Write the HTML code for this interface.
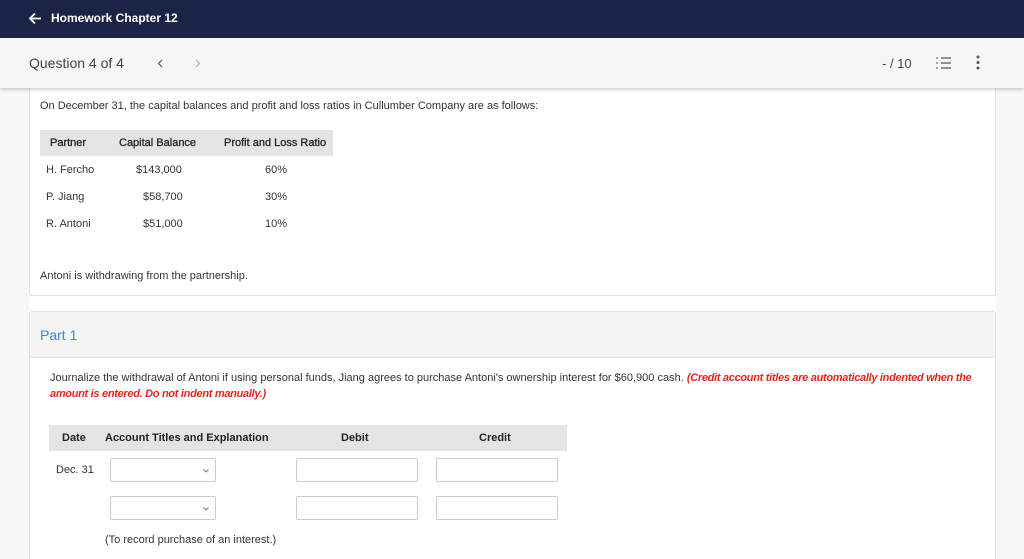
<!DOCTYPE html>
<html><head><style>
*{box-sizing:border-box;margin:0;padding:0}
html,body{width:1024px;height:559px;overflow:hidden}
body{background:#f7f7f7;font-family:"Liberation Sans",sans-serif;color:#333;position:relative}
.abs{position:absolute}
.nav{left:0;top:0;width:1024px;height:38px;background:#1b2347;color:#fff;font-size:12px;font-weight:bold}
.sub{left:0;top:38px;width:1024px;height:50px;background:#f6f6f6;box-shadow:0 2px 3px rgba(0,0,0,.18);z-index:2}
.card1{left:29px;top:86px;width:967px;height:210px;background:#fff;border:1px solid #e2e2e2;border-top:none;border-radius:0 0 3px 3px}
.gap{left:29px;top:296px;width:967px;height:16px;background:#fff}
.card2{left:29px;top:311px;width:967px;height:260px;background:#fff;border:1px solid #e0e0e0;border-radius:3px}
.ph{left:0;top:0;width:965px;height:46px;background:#f4f4f4;border-bottom:1px solid #e6e6e6}
.t{font-size:11px;color:#333;white-space:nowrap}
.th{background:#e4e4e4}
.hb{color:#222;-webkit-text-stroke:0.3px #222}
.inp{background:#fff;border:1px solid #ccc;border-radius:2px}
</style></head><body>
<div class="abs nav">
<svg class="abs" style="left:28px;top:12px" width="14" height="13" viewBox="0 0 14 13"><path d="M13 6.5H2M7 1.5L2 6.5L7 11.5" stroke="#fff" stroke-width="1.8" fill="none"/></svg>
<div class="abs" style="left:51px;top:11px">Homework Chapter 12</div>
</div>
<div class="abs sub">
<div class="abs" style="left:29px;top:17px;font-size:14px;color:#444">Question 4 of 4</div>
<svg class="abs" style="left:157px;top:21px" width="6" height="9"><path d="M5 1L1.5 4.5L5 8" stroke="#555" stroke-width="1.1" fill="none"/></svg>
<svg class="abs" style="left:195px;top:21px" width="6" height="9"><path d="M1 1L4.5 4.5L1 8" stroke="#aaa" stroke-width="1.1" fill="none"/></svg>
<div class="abs" style="left:882px;top:18px;font-size:13px;color:#444">- / 10</div>
<svg class="abs" style="left:936px;top:18px" width="16" height="14" viewBox="0 0 16 14"><g stroke="#555" stroke-width="1.2"><path d="M5 2H15M5 7H15M5 12H15"/><path d="M1 1V3M1 6V8M1 11V13" stroke-width="1"/></g></svg>
<svg class="abs" style="left:976px;top:17px" width="4" height="15"><circle cx="2" cy="2" r="1.5" fill="#555"/><circle cx="2" cy="7.5" r="1.5" fill="#555"/><circle cx="2" cy="13" r="1.5" fill="#555"/></svg>
</div>
<div class="abs card1"></div>
<div class="abs t" style="left:40px;top:100px">On December 31, the capital balances and profit and loss ratios in Cullumber Company are as follows:</div>
<div class="abs th" style="left:40px;top:130px;width:293px;height:26px"></div>
<div class="abs t hb" style="left:50px;top:137px">Partner</div>
<div class="abs t hb" style="left:119px;top:137px">Capital Balance</div>
<div class="abs t hb" style="left:224px;top:137px">Profit and Loss Ratio</div>
<div class="abs t" style="left:46px;top:164px">H. Fercho</div><div class="abs t" style="left:136px;top:164px">$143,000</div><div class="abs t" style="left:265px;top:164px">60%</div>
<div class="abs t" style="left:46px;top:191px">P. Jiang</div><div class="abs t" style="left:143px;top:191px">$58,700</div><div class="abs t" style="left:265px;top:191px">30%</div>
<div class="abs t" style="left:46px;top:218px">R. Antoni</div><div class="abs t" style="left:143px;top:218px">$51,000</div><div class="abs t" style="left:265px;top:218px">10%</div>
<div class="abs t" style="left:40px;top:270px">Antoni is withdrawing from the partnership.</div>
<div class="abs gap"></div>
<div class="abs card2"><div class="abs ph"></div>
<div class="abs" style="left:10px;top:15px;font-size:14px;color:#3b8ad8">Part 1</div></div>
<div class="abs t" style="left:50px;top:372px">Journalize the withdrawal of Antoni if using personal funds, Jiang agrees to purchase Antoni's ownership interest for $60,900 cash. <i style="color:#e3261c;font-weight:bold;letter-spacing:-.3px">(Credit account titles are automatically indented when the</i></div>
<div class="abs t" style="left:50px;top:388px;color:#e3261c;font-style:italic;font-weight:bold;letter-spacing:-.3px">amount is entered. Do not indent manually.)</div>
<div class="abs th" style="left:49px;top:425px;width:518px;height:26px"></div>
<div class="abs t" style="left:62px;top:432px;font-weight:bold;color:#222">Date</div>
<div class="abs t" style="left:105px;top:432px;font-weight:bold;color:#222">Account Titles and Explanation</div>
<div class="abs t" style="left:341px;top:432px;font-weight:bold;color:#222">Debit</div>
<div class="abs t" style="left:479px;top:432px;font-weight:bold;color:#222">Credit</div>
<div class="abs t" style="left:56px;top:464px">Dec. 31</div>
<div class="abs inp" style="left:110px;top:458px;width:106px;height:24px"><svg class="abs" style="right:6px;top:10px" width="6" height="4"><path d="M0.5 0.5L3 3L5.5 0.5" stroke="#777" fill="none"/></svg></div>
<div class="abs inp" style="left:296px;top:458px;width:122px;height:24px"></div>
<div class="abs inp" style="left:436px;top:458px;width:122px;height:24px"></div>
<div class="abs inp" style="left:110px;top:496px;width:106px;height:24px"><svg class="abs" style="right:6px;top:10px" width="6" height="4"><path d="M0.5 0.5L3 3L5.5 0.5" stroke="#777" fill="none"/></svg></div>
<div class="abs inp" style="left:296px;top:496px;width:122px;height:24px"></div>
<div class="abs inp" style="left:436px;top:496px;width:122px;height:24px"></div>
<div class="abs t" style="left:105px;top:534px">(To record purchase of an interest.)</div>
</body></html>
